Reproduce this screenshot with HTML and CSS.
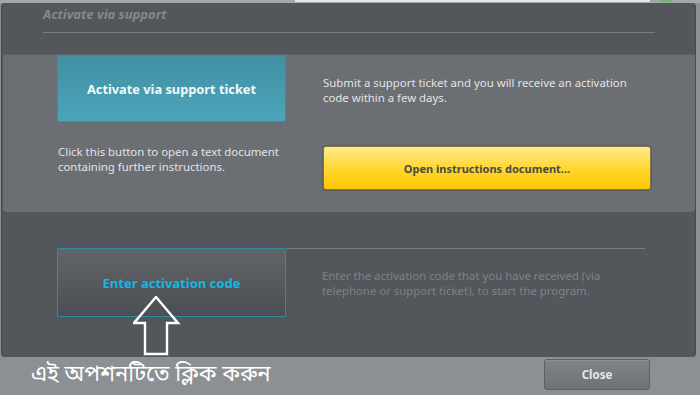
FILE: index.html
```html
<!DOCTYPE html>
<html>
<head>
<meta charset="utf-8">
<link rel="stylesheet" href="styles.css">
</head>
<body>
<div class="topstrip"><div class="topnoise"></div><div class="topgreen"></div></div>
<div class="dialog">
  <div class="title">Activate via support</div>
  <div class="rule"></div>
  <div class="ticket">
    <button class="btn-teal">Activate via support ticket</button>
    <p class="desc">Submit a support ticket and you will receive an activation code within a few days.</p>
    <p class="desc left">Click this button to open a text document containing further instructions.</p>
    <button class="btn-yellow">Open instructions document...</button>
  </div>
  <div class="code">
    <button class="btn-code">Enter activation code</button>
    <div class="code-side">
      <div class="code-rule"></div>
      <p class="desc dim">Enter the activation code that you have received (via telephone or support ticket), to start the program.</p>
    </div>
    <svg class="arrow" width="50" height="62" viewBox="0 0 50 62">
      <path d="M23 1 L45 27 L34 27 L34 58 L12 58 L12 27 L1 27 Z" fill="none" stroke="#ffffff" stroke-width="2.4" stroke-linejoin="miter"/>
    </svg>
  </div>
</div>
<div class="footer">
  <div class="bn">এই অপশনটিতে ক্লিক করুন</div>
  <button class="btn-close">Close</button>
</div>
</body>
</html>
```
FILE: styles.css
```css
html, body {
  margin: 0;
  padding: 0;
}
body {
  width: 700px;
  height: 395px;
  overflow: hidden;
  background: #8c8f93;
  font-family: "Noto Sans", "Open Sans", sans-serif;
  position: relative;
}
.topstrip {
  height: 3px;
  background: #a3a6aa;
  display: flex;
}
.topnoise {
  margin-left: 295px;
  width: 355px;
  height: 2px;
  background: #e9e7e2;
}
.topgreen {
  margin-left: 10px;
  width: 12px;
  height: 2px;
  background: #6bb86a;
}
.dialog {
  margin: 0 5px 0 2px;
  height: 354px;
  background: #53565b;
  border-radius: 4px;
  box-shadow: -1px 0 0 #46494d, 1px 0 0 #46494d;
  position: relative;
}
.title {
  padding: 3px 0 0 41px;
  font-size: 13px;
  line-height: 16px;
  font-weight: bold;
  font-style: italic;
  color: #85888d;
  box-sizing: border-box;
  height: 23px;
}
.rule {
  margin: 6px 0 0 41px;
  width: 612px;
  height: 1px;
  background: #787b80;
}
.ticket {
  margin: 21px 0 0 1px;
  height: 158px;
  background: #6b6e72;
  border-top: 1px solid #5f6266;
  border-radius: 0 0 4px 4px;
  box-sizing: border-box;
  display: grid;
  grid-template-columns: 229px 365px;
  grid-template-rows: 67px auto;
  column-gap: 37px;
  padding-left: 54px;
  align-items: start;
}
.btn-teal {
  height: 67px;
  width: 229px;
  border: 1px solid #3d8da3;
  border-radius: 2px;
  background: linear-gradient(#428fa2, #4ba5bb);
  color: #f4f8f9;
  font: bold 12.8px "Noto Sans", sans-serif;
  padding: 0;
}
.desc {
  margin: 20px 0 0;
  font-size: 11.4px;
  line-height: 15px;
  color: #e3e4e5;
  width: 330px;
}
.desc.left {
  margin-top: 22px;
  width: 240px;
  padding-left: 1px;
}
.btn-yellow {
  margin-top: 24px;
  width: 328px;
  height: 44px;
  border: 1px solid #7f7550;
  border-radius: 3px;
  background: linear-gradient(#ffea8a, #ffd52c 55%, #ffc800);
  color: #4a4a48;
  font: bold 11px "Noto Sans", sans-serif;
  padding: 0;
  box-shadow: 0 0 0 1px #5c5f60;
}
.code {
  position: relative;
  display: flex;
  align-items: flex-start;
  padding-left: 55px;
  margin-top: 36px;
}
.btn-code {
  height: 69px;
  width: 229px;
  flex: none;
  border: 1px solid #2f8ca2;
  border-radius: 1px;
  background: linear-gradient(#616468, #4b4e53);
  color: #19b6e2;
  font: bold 13px "Noto Sans", sans-serif;
  padding: 0;
}
.code-side {
  display: flex;
  flex-direction: column;
}
.code-rule {
  width: 359px;
  height: 1px;
  background: #787b80;
}
.desc.dim {
  margin: 19px 0 0 36px;
  color: #7e8287;
  width: 310px;
}
.arrow {
  position: absolute;
  left: 131px;
  top: 48px;
}
.footer {
  display: flex;
  align-items: flex-start;
  justify-content: space-between;
  padding: 2px 50px 0 31px;
}
.bn {
  font-family: "Noto Sans Bengali", "Lohit Bengali", "FreeSerif", "Noto Sans", sans-serif;
  font-size: 22px;
  line-height: 30px;
  color: #ffffff;
  margin-top: 2px;
}
.btn-close {
  width: 106px;
  height: 31px;
  border: 1px solid #5c5f63;
  border-radius: 3px;
  background: linear-gradient(#808387, #6e7175);
  color: #e6e7e8;
  font: bold 11.5px "Noto Sans", sans-serif;
  padding: 0;
  box-shadow: inset 0 1px 0 #8d9094;
}
```
